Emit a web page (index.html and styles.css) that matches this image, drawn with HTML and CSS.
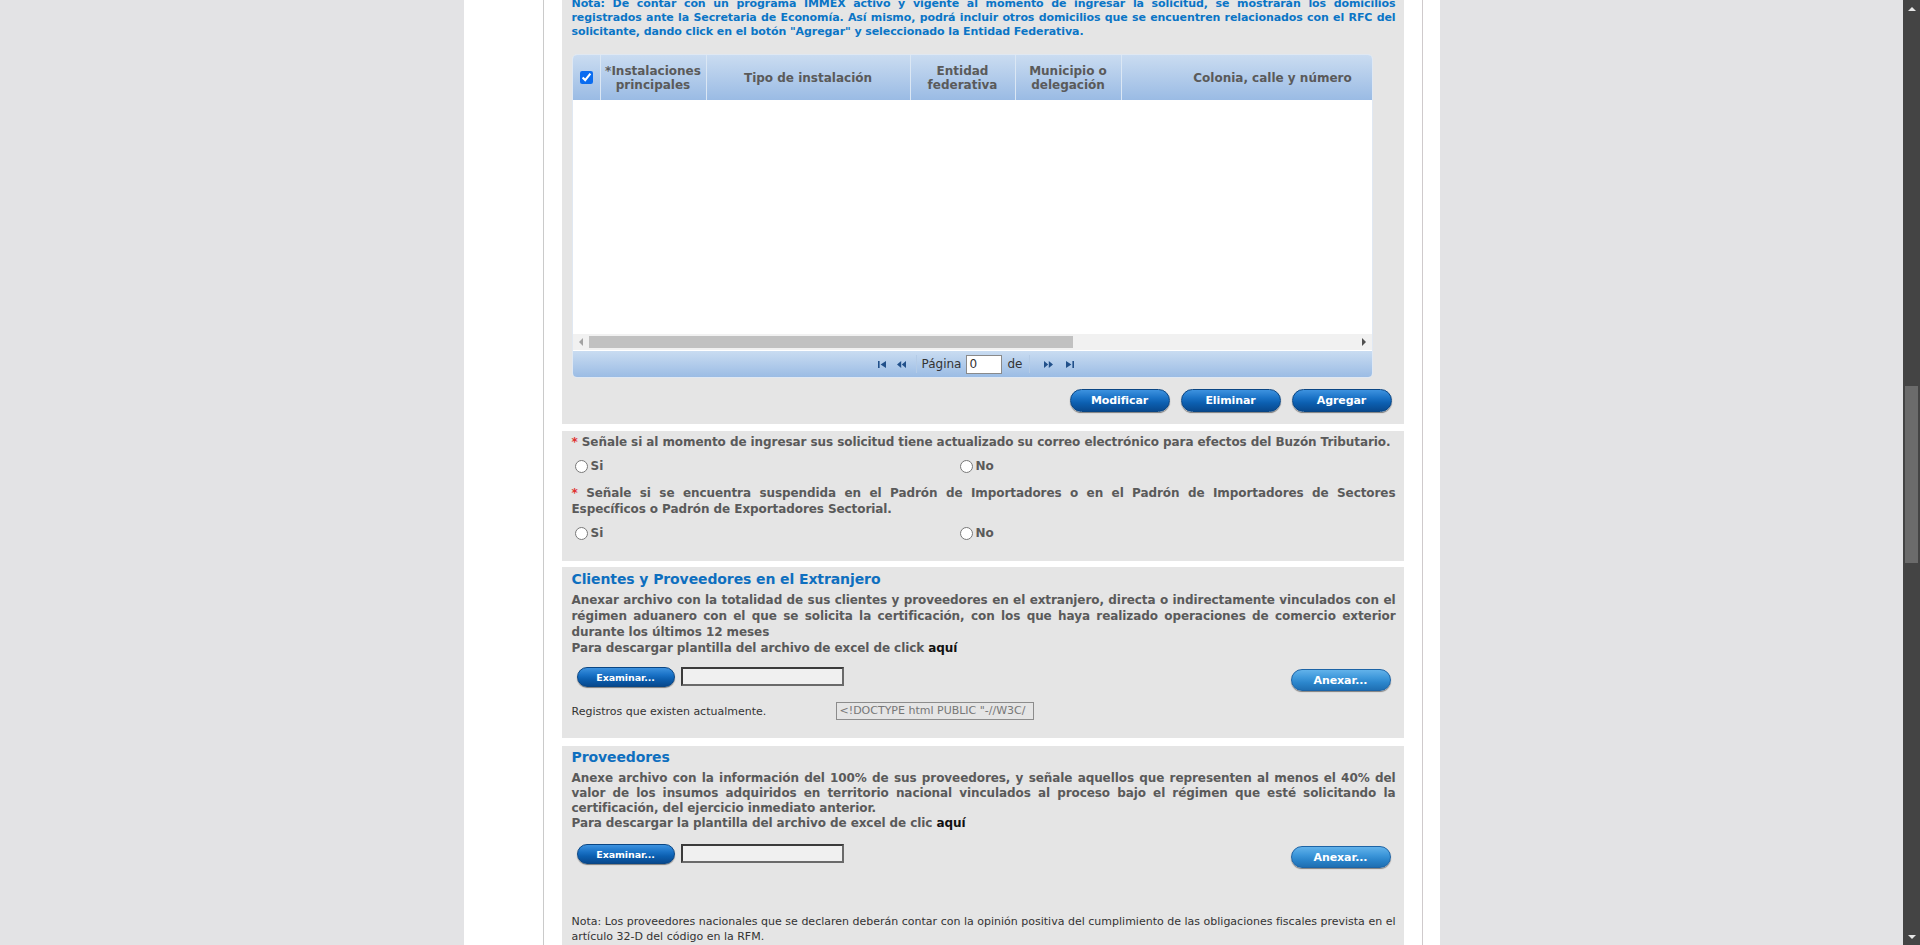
FILE: index.html
```html
<!DOCTYPE html>
<html lang="es">
<head>
<meta charset="utf-8">
<title>Solicitud - Instalaciones</title>
<link rel="stylesheet" href="styles.css">
</head>
<body>
<div class="viewport">
  <div class="page">
    <div class="gutter-left"></div>
    <main class="content">
      <section class="panel p-grid">
        <p class="nota-top"><span class="jl">Nota: De contar con un programa IMMEX activo y vigente al momento de ingresar la solicitud, se mostrarán los domicilios</span> <span class="jl">registrados ante la Secretaria de Economía. Así mismo, podrá incluir otros domicilios que se encuentren relacionados con el RFC del</span> <span class="ll">solicitante, dando click en el botón "Agregar" y seleccionado la Entidad Federativa.</span></p>
        <div class="grid">
          <div class="grid-head">
            <div class="th th-check"><input type="checkbox" checked></div>
            <div class="th th-inst">*Instalaciones<br>principales</div>
            <div class="th th-tipo">Tipo de instalación</div>
            <div class="th th-ent">Entidad<br>federativa</div>
            <div class="th th-mun">Municipio o<br>delegación</div>
            <div class="th th-col">Colonia, calle y número</div>
          </div>
          <div class="grid-body"></div>
          <div class="hscroll">
            <span class="hs-arrow hs-left"></span>
            <div class="hs-track"><div class="hs-thumb"></div></div>
            <span class="hs-arrow hs-right"></span>
          </div>
          <div class="pager">
            <span class="pg-btn"><svg class="pg-ico" viewBox="0 0 8 7" width="8" height="7"><path d="M0 0h1.6v7H0z M8 0 2.6 3.5 8 7z"/></svg></span>
            <span class="pg-btn"><svg class="pg-ico" viewBox="0 0 9 7" width="9" height="7"><path d="M4.2 0 0 3.5 4.2 7z M9 0 4.8 3.5 9 7z"/></svg></span>
            <span class="pg-sep"></span>
            <span class="pg-text">Página</span>
            <span class="pg-input">0</span>
            <span class="pg-text">de</span>
            <span class="pg-sep pg-sep-r"></span>
            <span class="pg-btn pg-btn-r"><svg class="pg-ico" viewBox="0 0 9 7" width="9" height="7"><path d="M0 0 4.2 3.5 0 7z M4.8 0 9 3.5 4.8 7z"/></svg></span>
            <span class="pg-btn pg-btn-r"><svg class="pg-ico" viewBox="0 0 8 7" width="8" height="7"><path d="M0 0 5.4 3.5 0 7z M6.4 0h1.6v7H6.4z"/></svg></span>
          </div>
        </div>
        <div class="actions">
          <button class="btn">Modificar</button>
          <button class="btn">Eliminar</button>
          <button class="btn">Agregar</button>
        </div>
      </section>

      <section class="panel p-q">
        <p class="q"><span class="req">*</span> Señale si al momento de ingresar sus solicitud tiene actualizado su correo electrónico para efectos del Buzón Tributario.</p>
        <div class="radios">
          <label class="opt"><input type="radio" name="buzon">Si</label>
          <label class="opt"><input type="radio" name="buzon">No</label>
        </div>
        <p class="q q2"><span class="req">*</span> Señale si se encuentra suspendida en el Padrón de Importadores o en el Padrón de Importadores de Sectores Específicos o Padrón de Exportadores Sectorial.</p>
        <div class="radios">
          <label class="opt"><input type="radio" name="padron">Si</label>
          <label class="opt"><input type="radio" name="padron">No</label>
        </div>
      </section>

      <section class="panel p-file p-clientes">
        <h2 class="title">Clientes y Proveedores en el Extranjero</h2>
        <p class="desc desc-16">Anexar archivo con la totalidad de sus clientes y proveedores en el extranjero, directa o indirectamente vinculados con el régimen aduanero con el que se solicita la certificación, con los que haya realizado operaciones de comercio exterior durante los últimos 12 meses<br>Para descargar plantilla del archivo de excel de click <a class="here">aquí</a></p>
        <div class="file-row">
          <button class="btn btn-exam">Examinar...</button>
          <span class="file-box"></span>
          <button class="btn btn-anexar">Anexar...</button>
        </div>
        <div class="reg-row">
          <span class="reg-label">Registros que existen actualmente.</span>
          <span class="reg-box">&lt;!DOCTYPE html PUBLIC "-//W3C/</span>
        </div>
      </section>

      <section class="panel p-file p-prov">
        <h2 class="title">Proveedores</h2>
        <p class="desc desc-15">Anexe archivo con la información del 100% de sus proveedores, y señale aquellos que representen al menos el 40% del valor de los insumos adquiridos en territorio nacional vinculados al proceso bajo el régimen que esté solicitando la certificación, del ejercicio inmediato anterior.<br>Para descargar la plantilla del archivo de excel de clic <a class="here">aquí</a></p>
        <div class="file-row file-row-prov">
          <button class="btn btn-exam">Examinar...</button>
          <span class="file-box"></span>
          <button class="btn btn-anexar">Anexar...</button>
        </div>
        <p class="nota-bottom">Nota: Los proveedores nacionales que se declaren deberán contar con la opinión positiva del cumplimiento de las obligaciones fiscales prevista en el artículo 32-D del código en la RFM.</p>
      </section>
    </main>
    <div class="gutter-right"></div>
  </div>
</div>
<div class="vscroll">
  <div class="vs-arrow vs-up"></div>
  <div class="vs-track"><div class="vs-thumb"></div></div>
  <div class="vs-arrow vs-down"></div>
</div>
</body>
</html>
```
FILE: styles.css
```css
* { box-sizing: border-box; }
html, body { margin: 0; height: 100%; }
body {
  display: flex;
  height: 945px;
  overflow: hidden;
  background: #e3e3e5;
  font-family: "DejaVu Sans", Verdana, sans-serif;
  color: #5a5a5a;
}
.viewport { flex: 1; min-width: 0; overflow: hidden; }
.page {
  width: 976px;
  margin: -3px auto 0;
  display: flex;
  background: #fff;
  min-height: 1000px;
}
.gutter-left { flex: none; width: 79px; }
.gutter-right { flex: none; width: 17px; }
.content {
  flex: none;
  width: 880px;
  border-left: 1px solid #cacaca;
  border-right: 1px solid #cfcacc;
  padding: 0 18px;
}
.panel { background: #e5e5e5; padding: 0 8px 0 10px; }
.p-grid { padding-bottom: 12px; }

.nota-top {
  margin: 0;
  font-size: 11px;
  line-height: 14px;
  font-weight: bold;
  color: #0b75c6;
  letter-spacing: -0.08px;
}
.nota-top .jl { display: block; text-align: justify; text-align-last: justify; white-space: nowrap; }
.nota-top .ll { display: block; }

/* grid */
.grid {
  margin-top: 15px;
  width: 801px;
  border: 1px solid #e0e8f2;
  border-radius: 5px;
  overflow: hidden;
  background: #fff;
}
.grid-head {
  display: flex;
  height: 45px;
  background: linear-gradient(#cadcf1, #9abbe4);
  overflow: hidden;
}
.th {
  flex: none;
  display: flex;
  align-items: center;
  justify-content: center;
  text-align: center;
  border-right: 1px solid #dbe7f4;
  font-size: 12px;
  line-height: 14px;
  font-weight: bold;
  color: #5a5a5a;
  white-space: nowrap;
  overflow: hidden;
}
.th-check { width: 28px; }
.th-check input { margin: 0; width: 13px; height: 13px; accent-color: #0a6cf0; }
.th-inst { width: 106px; }
.th-tipo { width: 204px; }
.th-ent { width: 105px; }
.th-mun { width: 106px; }
.th-col { width: 302px; border-right: none; }
.grid-body { height: 234px; }

.hscroll { display: flex; height: 16px; background: #f1f1f1; }
.hs-arrow { flex: none; width: 16px; display: flex; align-items: center; justify-content: center; }
.hs-arrow::before {
  content: "";
  border-top: 4px solid transparent;
  border-bottom: 4px solid transparent;
}
.hs-left::before { border-right: 4px solid #a3a3a3; }
.hs-right::before { border-left: 4px solid #505050; }
.hs-track { flex: 1; padding: 2px 0; }
.hs-thumb { width: 484px; height: 12px; background: #c1c1c1; }

.pager {
  height: 27px;
  border-top: 1px solid #fff;
  background: linear-gradient(#c9dcf1, #9bbce4);
  display: flex;
  align-items: center;
  justify-content: center;
  padding-left: 9px;
  font-size: 12px;
  color: #333;
}
.pg-btn { width: 18px; height: 18px; display: flex; align-items: center; justify-content: center; }
.pg-btn + .pg-btn { margin-left: 2px; }
.pg-btn-r { width: 20px; }
.pg-ico { fill: #21508a; }
.pg-sep { width: 1px; height: 18px; background: #b4cbe6; margin: 0 5px; }
.pg-sep-r { margin: 0 8px 0 7px; }
.pg-text { line-height: 18px; }
.pg-input {
  width: 36px;
  height: 19px;
  margin: 0 5px;
  background: #fff;
  border: 1px solid #8a8a8a;
  font-size: 12px;
  line-height: 17px;
  padding-left: 2px;
  color: #333;
}

/* buttons */
.actions {
  display: flex;
  justify-content: flex-end;
  gap: 11px;
  margin-top: 11px;
  padding-right: 4px;
}
.btn {
  width: 100px;
  height: 23px;
  padding: 0;
  border: 1px solid #0a4684;
  border-radius: 12px;
  background: linear-gradient(#3d92df 0%, #1a72c6 38%, #0c5fb0 62%, #08498e 100%);
  box-shadow: 0 1px 1px rgba(0, 0, 0, 0.45);
  color: #fff;
  font-family: "DejaVu Sans", Verdana, sans-serif;
  font-size: 11px;
  font-weight: bold;
  letter-spacing: -0.1px;
}
.btn-exam {
  width: 98px;
  height: 20px;
  margin-left: 5px;
  font-size: 9.5px;
}
.btn-anexar {
  margin-left: auto;
  margin-top: 2px;
  margin-right: 5px;
  height: 22px;
  border-color: #1d64a6;
  background: linear-gradient(#62b2ea 0%, #3d97da 40%, #2b85cb 65%, #1f6fb2 100%);
}

/* questions */
.p-q { padding: 3px 8px 18px 10px; }
.q {
  margin: 0;
  font-size: 12px;
  line-height: 16px;
  font-weight: bold;
  text-align: justify;
  letter-spacing: -0.08px;
}
.q2 { margin-top: 9px; }
.req { color: #e0312f; }
.radios {
  display: grid;
  grid-template-columns: 385px 1fr;
  height: 20px;
  margin-top: 6px;
  align-items: center;
}
.opt {
  display: flex;
  align-items: center;
  font-size: 12px;
  font-weight: bold;
  color: #5a5a5a;
}
.opt input { margin: 0 3px 0 3px; width: 13px; height: 13px; }

/* file panels */
.p-clientes { padding: 3px 8px 18px 10px; }
.p-prov { padding: 2px 8px 10px 10px; }
.panel + .panel { margin-top: 7px; }
.p-clientes { margin-top: 6px !important; }
.p-prov { margin-top: 8px !important; }
.title {
  margin: 0;
  font-size: 14px;
  line-height: 18px;
  font-weight: bold;
  color: #0e6fbf;
  letter-spacing: -0.1px;
}
.desc {
  margin: 4px 0 0;
  font-size: 12px;
  font-weight: bold;
  text-align: justify;
  letter-spacing: -0.08px;
}
.desc-16 { line-height: 16px; }
.desc-15 { line-height: 15px; margin-top: 5px; }
.here { color: #111; }
.file-row {
  display: flex;
  align-items: flex-start;
  margin-top: 11px;
  height: 24px;
}
.file-row-prov { margin-top: 13px; }
.file-box {
  width: 163px;
  height: 19px;
  margin-left: 6px;
  border: 2px solid #3b3b3b;
  border-right-color: #6a6a6a;
  border-bottom-color: #6a6a6a;
  background: #f0f0f0;
}
.reg-row {
  display: flex;
  align-items: center;
  margin-top: 11px;
  font-size: 11px;
  color: #333;
}
.reg-label { width: 264px; }
.reg-box {
  width: 198px;
  height: 18px;
  border: 1px solid #8c8c8c;
  overflow: hidden;
  white-space: nowrap;
  color: #777;
  font-size: 11px;
  line-height: 16px;
  padding-left: 3px;
}
.nota-bottom {
  margin: 46px 0 0;
  font-size: 11px;
  line-height: 15px;
  color: #333;
  text-align: justify;
}

/* page scrollbar */
.vscroll {
  flex: none;
  width: 17px;
  height: 945px;
  background: #444;
  display: flex;
  flex-direction: column;
}
.vs-arrow { flex: none; height: 17px; display: flex; align-items: center; justify-content: center; }
.vs-arrow::before {
  content: "";
  border-left: 4px solid transparent;
  border-right: 4px solid transparent;
}
.vs-up::before { border-bottom: 4px solid #e6e6e6; }
.vs-down::before { border-top: 4px solid #e6e6e6; }
.vs-track { flex: 1; }
.vs-thumb { margin: 369px 2px 0; height: 177px; background: #6b6b6b; }
```
